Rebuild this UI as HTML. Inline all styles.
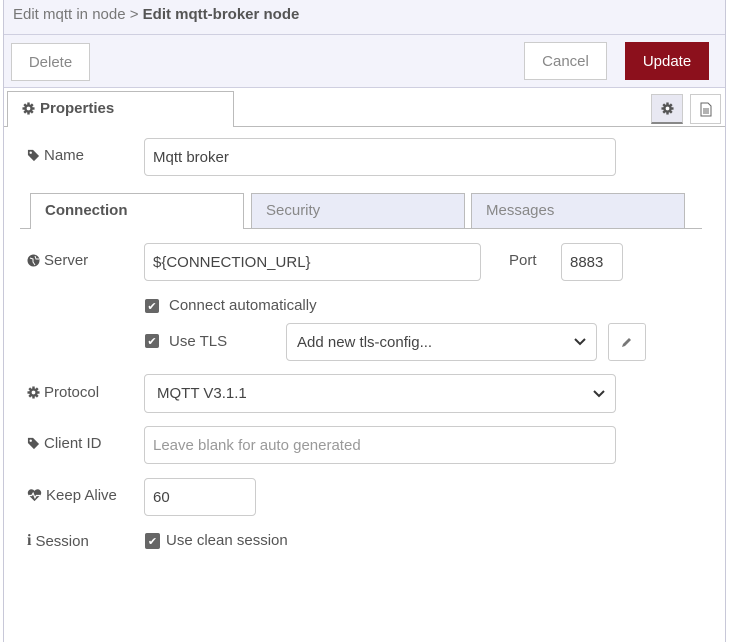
<!DOCTYPE html>
<html><head><style>
*{box-sizing:border-box;margin:0;padding:0}
body{width:729px;height:642px;background:#fff;font-family:"Liberation Sans",sans-serif;font-size:14px;color:#555;position:relative;overflow:hidden}
.a{position:absolute}
.panel{left:3px;top:0;width:723px;height:642px;border-left:1px solid #c8c8d8;border-right:1px solid #c8c8d8;background:#fff}
.hdr{left:4px;top:0;width:721px;height:35px;background:#f3f3fb;border-bottom:1px solid #cfcfe0}
.tb{left:4px;top:35px;width:721px;height:53px;background:#f3f3fb;border-bottom:1px solid #cfcfe0}
.btn{border:1px solid #ccc;background:#fff;color:#888;font-size:15px;display:flex;align-items:center;justify-content:center}
.inp{border:1px solid #ccc;border-radius:4px;background:#fff;color:#444;font-size:15px;display:flex;align-items:center;padding-left:8px}
.lbl{font-size:15px;color:#555;display:flex;align-items:center;gap:4px}
.cb{width:14px;height:14px;background:#666;border-radius:2px;color:#fff;font-size:11px;display:flex;align-items:center;justify-content:center}
.chev{position:absolute;right:10px;top:50%;margin-top:-4px}
</style></head><body>
<svg width="0" height="0" style="position:absolute"><defs>
<symbol id="tag" viewBox="0 0 14 14"><path d="M1 1h5.5l6.5 6.5-5.5 5.5L1 6.5z" fill="#555"/><circle cx="4" cy="4" r="1.3" fill="#fff"/></symbol>
<symbol id="gear" viewBox="0 0 14 14"><g fill="#555"><circle cx="7" cy="7" r="4.6"/><rect x="5.7" y="0.5" width="2.6" height="13"/><rect x="0.5" y="5.7" width="13" height="2.6"/><rect x="5.7" y="0.5" width="2.6" height="13" transform="rotate(45 7 7)"/><rect x="5.7" y="0.5" width="2.6" height="13" transform="rotate(-45 7 7)"/></g><circle cx="7" cy="7" r="2" fill="#fff"/></symbol>
</defs></svg>
<div class="a panel"></div>
<div class="a hdr"></div>
<div class="a" style="left:13px;top:6px;font-size:15px;color:#777">Edit mqtt in node &gt; <b style="color:#555">Edit mqtt-broker node</b></div>
<div class="a tb"></div>
<div class="a btn" style="left:11px;top:43px;width:79px;height:38px">Delete</div>
<div class="a btn" style="left:524px;top:42px;width:83px;height:38px">Cancel</div>
<div class="a btn" style="left:625px;top:42px;width:84px;height:38px;background:#8c101c;border-color:#8c101c;color:#fff">Update</div>
<div class="a" style="left:4px;top:126px;width:721px;border-top:1px solid #bbb"></div>
<div class="a" style="left:7px;top:91px;width:227px;height:36px;background:#fff;border:1px solid #bbb;border-bottom:none;font-weight:bold;font-size:15px;color:#555;padding:8px 0 0 14px;display:flex;align-items:flex-start;gap:5px"><svg width="13" height="13" style="margin-top:2px"><use href="#gear"/></svg>Properties</div>
<div class="a" style="left:651px;top:94px;width:32px;height:30px;background:#e8e8f2;border:1px solid #ccc;border-bottom:2px solid #888;display:flex;align-items:center;justify-content:center"><svg width="13" height="13"><use href="#gear"/></svg></div>
<div class="a" style="left:690px;top:94px;width:31px;height:30px;background:#fff;border:1px solid #ccc;display:flex;align-items:center;justify-content:center">
<svg width="12" height="15" viewBox="0 0 12 15"><path d="M1 1h7l3 3v10H1z" fill="none" stroke="#666"/><path d="M3 7h6M3 9h6M3 11h6" stroke="#666"/></svg></div>

<div class="a lbl" style="left:27px;top:147px"><svg width="13" height="13"><use href="#tag"/></svg>Name</div>
<div class="a inp" style="left:144px;top:138px;width:472px;height:38px">Mqtt broker</div>

<div class="a" style="left:20px;top:228px;width:682px;border-top:1px solid #bbb"></div>
<div class="a" style="left:30px;top:193px;width:214px;height:36px;background:#fff;border:1px solid #bbb;border-bottom:none;font-weight:bold;font-size:15px;color:#555;padding:8px 0 0 14px">Connection</div>
<div class="a" style="left:251px;top:193px;width:214px;height:35px;background:#e9ebf7;border:1px solid #bbb;border-bottom:none;font-size:15px;color:#888;padding:8px 0 0 14px">Security</div>
<div class="a" style="left:471px;top:193px;width:214px;height:35px;background:#e9ebf7;border:1px solid #bbb;border-bottom:none;font-size:15px;color:#888;padding:8px 0 0 14px">Messages</div>

<div class="a lbl" style="left:27px;top:252px"><svg width="13" height="13"><circle cx="6.5" cy="6.5" r="6" fill="#555"/><path d="M3 4l3 1 0 3 2 3M8 2l1 3 3 0" stroke="#fff" fill="none"/></svg>Server</div>
<div class="a inp" style="left:144px;top:243px;width:337px;height:38px">${CONNECTION_URL}</div>
<div class="a lbl" style="left:509px;top:252px">Port</div>
<div class="a inp" style="left:561px;top:243px;width:62px;height:38px">8883</div>

<div class="a cb" style="left:145px;top:299px">✔</div>
<div class="a lbl" style="left:169px;top:297px">Connect automatically</div>
<div class="a cb" style="left:145px;top:334px">✔</div>
<div class="a lbl" style="left:169px;top:333px">Use TLS</div>
<div class="a inp" style="left:286px;top:323px;width:311px;height:38px;padding-left:10px">Add new tls-config...<svg class="chev" width="12" height="8"><path d="M1 1l5 5 5-5" stroke="#333" stroke-width="2" fill="none"/></svg></div>
<div class="a" style="left:608px;top:323px;width:38px;height:38px;border:1px solid #ccc;border-radius:3px;display:flex;align-items:center;justify-content:center"><svg width="12" height="12"><path d="M1 11l1-3 6-6 2 2-6 6z" fill="#777"/></svg></div>

<div class="a lbl" style="left:27px;top:384px"><svg width="13" height="13"><use href="#gear"/></svg>Protocol</div>
<div class="a inp" style="left:144px;top:374px;width:472px;height:39px;padding-left:12px">MQTT V3.1.1<svg class="chev" width="12" height="8"><path d="M1 1l5 5 5-5" stroke="#333" stroke-width="2" fill="none"/></svg></div>

<div class="a lbl" style="left:27px;top:435px"><svg width="13" height="13"><use href="#tag"/></svg>Client ID</div>
<div class="a inp" style="left:144px;top:426px;width:472px;height:38px;color:#999">Leave blank for auto generated</div>

<div class="a lbl" style="left:27px;top:487px"><svg width="15" height="13" viewBox="0 0 16 14"><path d="M8 13L1.5 6.5A3.6 3.6 0 0 1 8 2a3.6 3.6 0 0 1 6.5 4.5z" fill="#555"/><path d="M2 7h3l1.5-2.5 2 5 1.5-2.5h4" stroke="#fff" stroke-width="1.3" fill="none"/></svg>Keep Alive</div>
<div class="a inp" style="left:144px;top:478px;width:112px;height:38px">60</div>

<div class="a lbl" style="left:27px;top:532px"><b style="font-family:'Liberation Serif',serif;font-size:16px">i</b> Session</div>
<div class="a cb" style="left:145px;top:533px;width:15px;height:16px">✔</div>
<div class="a lbl" style="left:166px;top:532px">Use clean session</div>
</body></html>
